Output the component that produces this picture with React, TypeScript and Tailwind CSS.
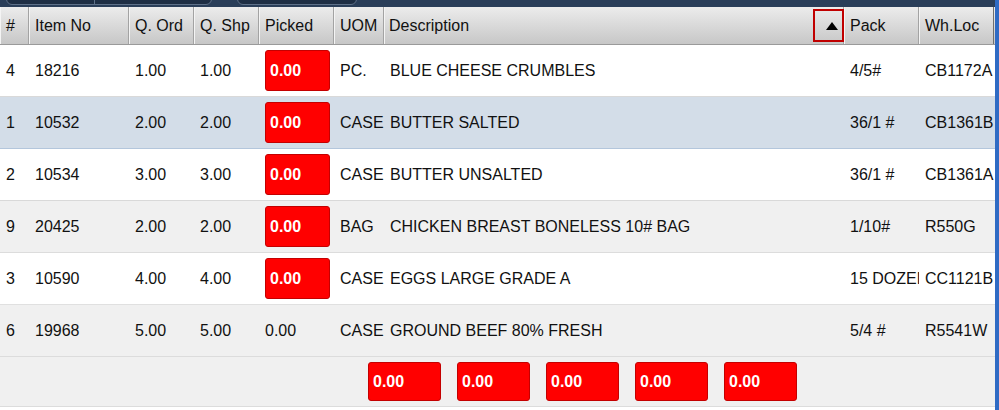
import React from "react";

type Row = {
  n: string;
  item: string;
  ord: string;
  shp: string;
  picked: string;
  box: boolean;
  uom: string;
  desc: string;
  pack: string;
  loc: string;
  bg: string;
};

const rows: Row[] = [
  { n: "4", item: "18216", ord: "1.00", shp: "1.00", picked: "0.00", box: true, uom: "PC.", desc: "BLUE CHEESE CRUMBLES", pack: "4/5#", loc: "CB1172A", bg: "bg-white border-[#d9d9d9]" },
  { n: "1", item: "10532", ord: "2.00", shp: "2.00", picked: "0.00", box: true, uom: "CASE", desc: "BUTTER SALTED", pack: "36/1 #", loc: "CB1361B", bg: "bg-[#d3dde8] border-[#b3c6dc]" },
  { n: "2", item: "10534", ord: "3.00", shp: "3.00", picked: "0.00", box: true, uom: "CASE", desc: "BUTTER UNSALTED", pack: "36/1 #", loc: "CB1361A", bg: "bg-white border-[#d9d9d9]" },
  { n: "9", item: "20425", ord: "2.00", shp: "2.00", picked: "0.00", box: true, uom: "BAG", desc: "CHICKEN BREAST BONELESS 10# BAG", pack: "1/10#", loc: "R550G", bg: "bg-[#f0f0f0] border-[#dcdcdc]" },
  { n: "3", item: "10590", ord: "4.00", shp: "4.00", picked: "0.00", box: true, uom: "CASE", desc: "EGGS LARGE GRADE A", pack: "15 DOZEN", loc: "CC1121B", bg: "bg-white border-[#e0e0e0]" },
  { n: "6", item: "19968", ord: "5.00", shp: "5.00", picked: "0.00", box: false, uom: "CASE", desc: "GROUND BEEF 80% FRESH", pack: "5/4 #", loc: "R5541W", bg: "bg-[#f0f0f0] border-[#dcdcdc]" },
];

const grid = "grid grid-cols-[29px_100px_65px_65px_75px_50px_460px_75px_75px]";

function Cell({ children, className = "" }: { children?: React.ReactNode; className?: string }) {
  return <div className={`flex items-center overflow-hidden whitespace-nowrap pl-[6px] ${className}`}>{children}</div>;
}

function RedBox({ w, h }: { w: string; h: string }) {
  return (
    <div className={`${w} ${h} flex items-center rounded-[3px] border border-[#c40000] bg-[#ff0000] pl-[4px] text-[16px] font-bold text-white`}>
      0.00
    </div>
  );
}

function HeaderCell({ label, className = "" }: { label: string; className?: string }) {
  return (
    <div className={`relative flex items-center border-r border-[#a3a3a3] pl-[6px] shadow-[inset_1px_0_0_#f4f4f4] whitespace-nowrap overflow-hidden ${className}`}>
      {label}
    </div>
  );
}

export default function App() {
  return (
    <div className="flex h-[410px] w-[999px] bg-white text-[#111] [font-family:'Liberation_Sans',Arial,sans-serif] text-[16px]">
      <div className="flex w-[995px] flex-col">
        {/* top strip */}
        <div className="relative h-[7px] bg-[#2a3e59]">
          <div className="absolute left-[6px] top-[-4px] flex h-[9px] w-[206px] rounded-b-[6px] border border-[#5e7088] bg-[#1e2e44]">
            <div className="w-[88px] border-r border-[#5e7088]" />
          </div>
          <div className="absolute left-[237px] top-[-4px] h-[9px] w-[120px] rounded-b-[6px] border border-[#5e7088] bg-[#1e2e44]" />
        </div>
        {/* header */}
        <div className={`${grid} h-[38px] border-b border-[#9a9a9a] bg-gradient-to-b from-[#ececec] to-[#c7c7c7] text-[#111]`}>
          <HeaderCell label="#" className="pl-[4px]" />
          <HeaderCell label="Item No" />
          <HeaderCell label="Q. Ord" />
          <HeaderCell label="Q. Shp" />
          <HeaderCell label="Picked" className="pl-[5px]" />
          <HeaderCell label="UOM" className="pl-[5px]" />
          <div className="relative flex items-center border-r border-[#a3a3a3] pl-[5px] shadow-[inset_1px_0_0_#f4f4f4]">
            Description
            <div className="absolute right-[-1px] top-[2px] flex h-[33px] w-[31px] items-center justify-center border-2 border-[#c00000]">
              <svg width="12" height="8" viewBox="0 0 12 8" className="ml-[6px] mt-[1px]">
                <path d="M6 0 L12 8 L0 8 Z" fill="#000" />
              </svg>
            </div>
          </div>
          <HeaderCell label="Pack" />
          <HeaderCell label="Wh.Loc" className="border-r-[#6f6f6f]" />
        </div>
        {/* rows */}
        {rows.map((r, i) => (
          <div key={i} className={`${grid} h-[52px] border-b ${r.bg}`}>
            <Cell className="pl-[4px]">{r.n}</Cell>
            <Cell>{r.item}</Cell>
            <Cell>{r.ord}</Cell>
            <Cell>{r.shp}</Cell>
            <Cell className="pl-[5px]">
              {r.box ? <RedBox w="w-[65px]" h="h-[41px]" /> : r.picked}
            </Cell>
            <Cell className="pl-[5px]">{r.uom}</Cell>
            <Cell className="pl-[5px]">{r.desc}</Cell>
            <Cell className="pl-[6px]">{r.pack}</Cell>
            <Cell className="pl-[6px]">{r.loc}</Cell>
          </div>
        ))}
        {/* footer */}
        <div className="flex h-[50px] items-center gap-[16px] border-b border-[#dcdcdc] bg-[#f0f0f0] pl-[368px]">
          {[0, 1, 2, 3, 4].map((k) => (
            <RedBox key={k} w="w-[73px]" h="h-[39px]" />
          ))}
        </div>
        <div className="flex-1 bg-white" />
      </div>
      <div className="w-[4px] bg-[#2f6bc4]" />
    </div>
  );
}
